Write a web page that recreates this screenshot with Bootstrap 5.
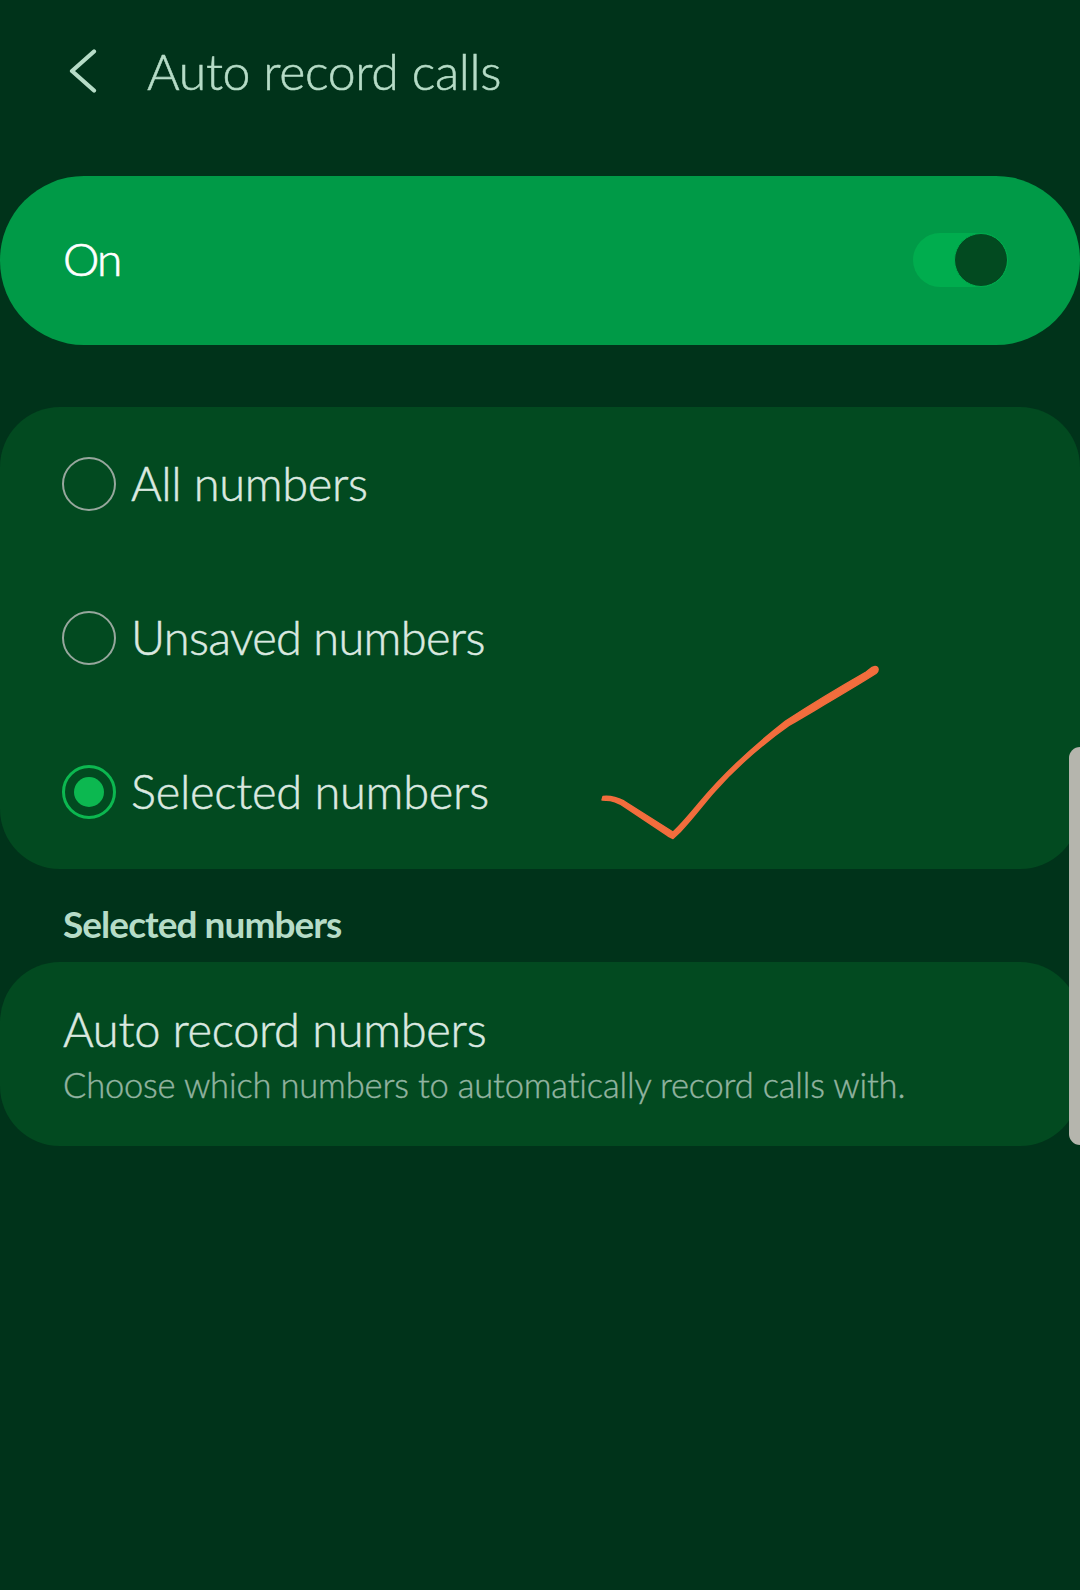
<!DOCTYPE html>
<html lang="en">
<head>
<meta charset="utf-8">
<title>Auto record calls</title>
<link href="https://cdn.jsdelivr.net/npm/bootstrap@5.3.0/dist/css/bootstrap.min.css" rel="stylesheet">
<style>
html,body{height:100%}
body{background:#00331a;font-family:"Lato","Noto Sans",sans-serif;font-weight:300;overflow:hidden;font-variant-ligatures:none}
.screen{position:relative;width:1080px;height:1590px;background:#00331a}
.topbar{height:176px;padding:0 0 35px 69px;gap:50px}
.topbar h1{font-size:50px;font-weight:300;margin:0;color:#b6dcc7;line-height:1;letter-spacing:-.35px;font-family:"Lato",sans-serif;-webkit-text-stroke:.55px #b6dcc7}
.on-bar{height:169px;background:#009a47;border-radius:84px;padding:0 72px 0 63px;margin-bottom:62px}
.on-label{color:#fff;font-size:46px;line-height:1;font-weight:300;letter-spacing:-2px;margin-top:-4px;-webkit-text-stroke:.7px #fff}
.sw-track{width:95px;height:54px;border-radius:27px;background:#00ad4e;display:flex;justify-content:flex-end;margin-top:-1px}
.sw-knob{width:54px;height:54px;border-radius:50%;background:#024a20;border:1px solid #00ad4e}
.panel{background:#024a20;border-radius:60px}
.choice{height:154px;padding-left:62px;gap:15px;color:#dbe9e0;font-size:47px;line-height:1;-webkit-text-stroke:.5px #dbe9e0}
.choice-a{letter-spacing:-.35px}
.choice-b{letter-spacing:-.7px}
.choice-c{letter-spacing:-.25px}
.choice>span:last-child{margin-top:-2px}
.dot{width:54px;height:54px;border-radius:50%;border:2px solid #97a79d;flex:none}
.dot-on{border:3px solid #0cb850;display:flex;align-items:center;justify-content:center}
.dot-on::after{content:"";width:30px;height:30px;border-radius:50%;background:#0cb850}
.sec-label{color:#b6dcc7;font-size:37px;font-weight:700;line-height:1;padding:36px 0 17px 63px;height:93px;letter-spacing:-.95px}
.num-panel{height:184px;padding:0 63px;border-radius:60px}
.num-title{color:#dbe9e0;font-size:47px;line-height:1;margin-bottom:15px;letter-spacing:-.3px;-webkit-text-stroke:.5px #dbe9e0}
.num-sub{color:#93b4a1;font-size:34.5px;line-height:1;letter-spacing:-.17px;-webkit-text-stroke:.4px #93b4a1}
.edge{position:absolute;right:0;top:747px;width:11px;height:398px;background:#b5b5ad;border-radius:11px 0 0 11px}
.tick{position:absolute;left:0;top:0;pointer-events:none}
</style>
</head>
<body>
<div class="screen">
  <div class="topbar d-flex align-items-center">
    <svg width="28" height="44" viewBox="0 0 28 44" fill="none" stroke="#b6dcc7" stroke-width="4.2" stroke-linecap="round" stroke-linejoin="round" aria-hidden="true"><path d="M25 2.500 3 22l22 19.500"/></svg>
    <h1>Auto record calls</h1>
  </div>
  <div class="on-bar d-flex align-items-center justify-content-between">
    <span class="on-label">On</span>
    <span class="sw-track"><span class="sw-knob"></span></span>
  </div>
  <div class="panel">
    <div class="choice choice-a d-flex align-items-center"><span class="dot"></span><span>All numbers</span></div>
    <div class="choice choice-b d-flex align-items-center"><span class="dot"></span><span>Unsaved numbers</span></div>
    <div class="choice choice-c d-flex align-items-center"><span class="dot dot-on"></span><span>Selected numbers</span></div>
  </div>
  <div class="sec-label">Selected numbers</div>
  <div class="panel num-panel d-flex flex-column justify-content-center">
    <div class="num-title">Auto record numbers</div>
    <div class="num-sub">Choose which numbers to automatically record calls with.</div>
  </div>
  <svg class="tick" width="1080" height="1590" viewBox="0 0 1080 1590" fill="#f26d3d" stroke="#f26d3d" stroke-width="1.4" stroke-linejoin="round" aria-hidden="true">
    <path d="M603 796.500C612 795.500 618 798 624 801L673 832C680 826 690 814 700 802 725 772 755 745 785.500 721 810 705 845 684 866 672 869 670 871 667 875 666.500 879 667 879 671 876 673.500 850 690 815 710 789 725.500 757 748 730 774 714.500 791.500 705 802 695 816 680 832L673 838.500 668 836 620 804C612 800 608 800 602 800Z"/>
  </svg>
  <div class="edge"></div>
</div>
<script src="https://cdn.jsdelivr.net/npm/bootstrap@5.3.0/dist/js/bootstrap.bundle.min.js"></script>
</body>
</html>
